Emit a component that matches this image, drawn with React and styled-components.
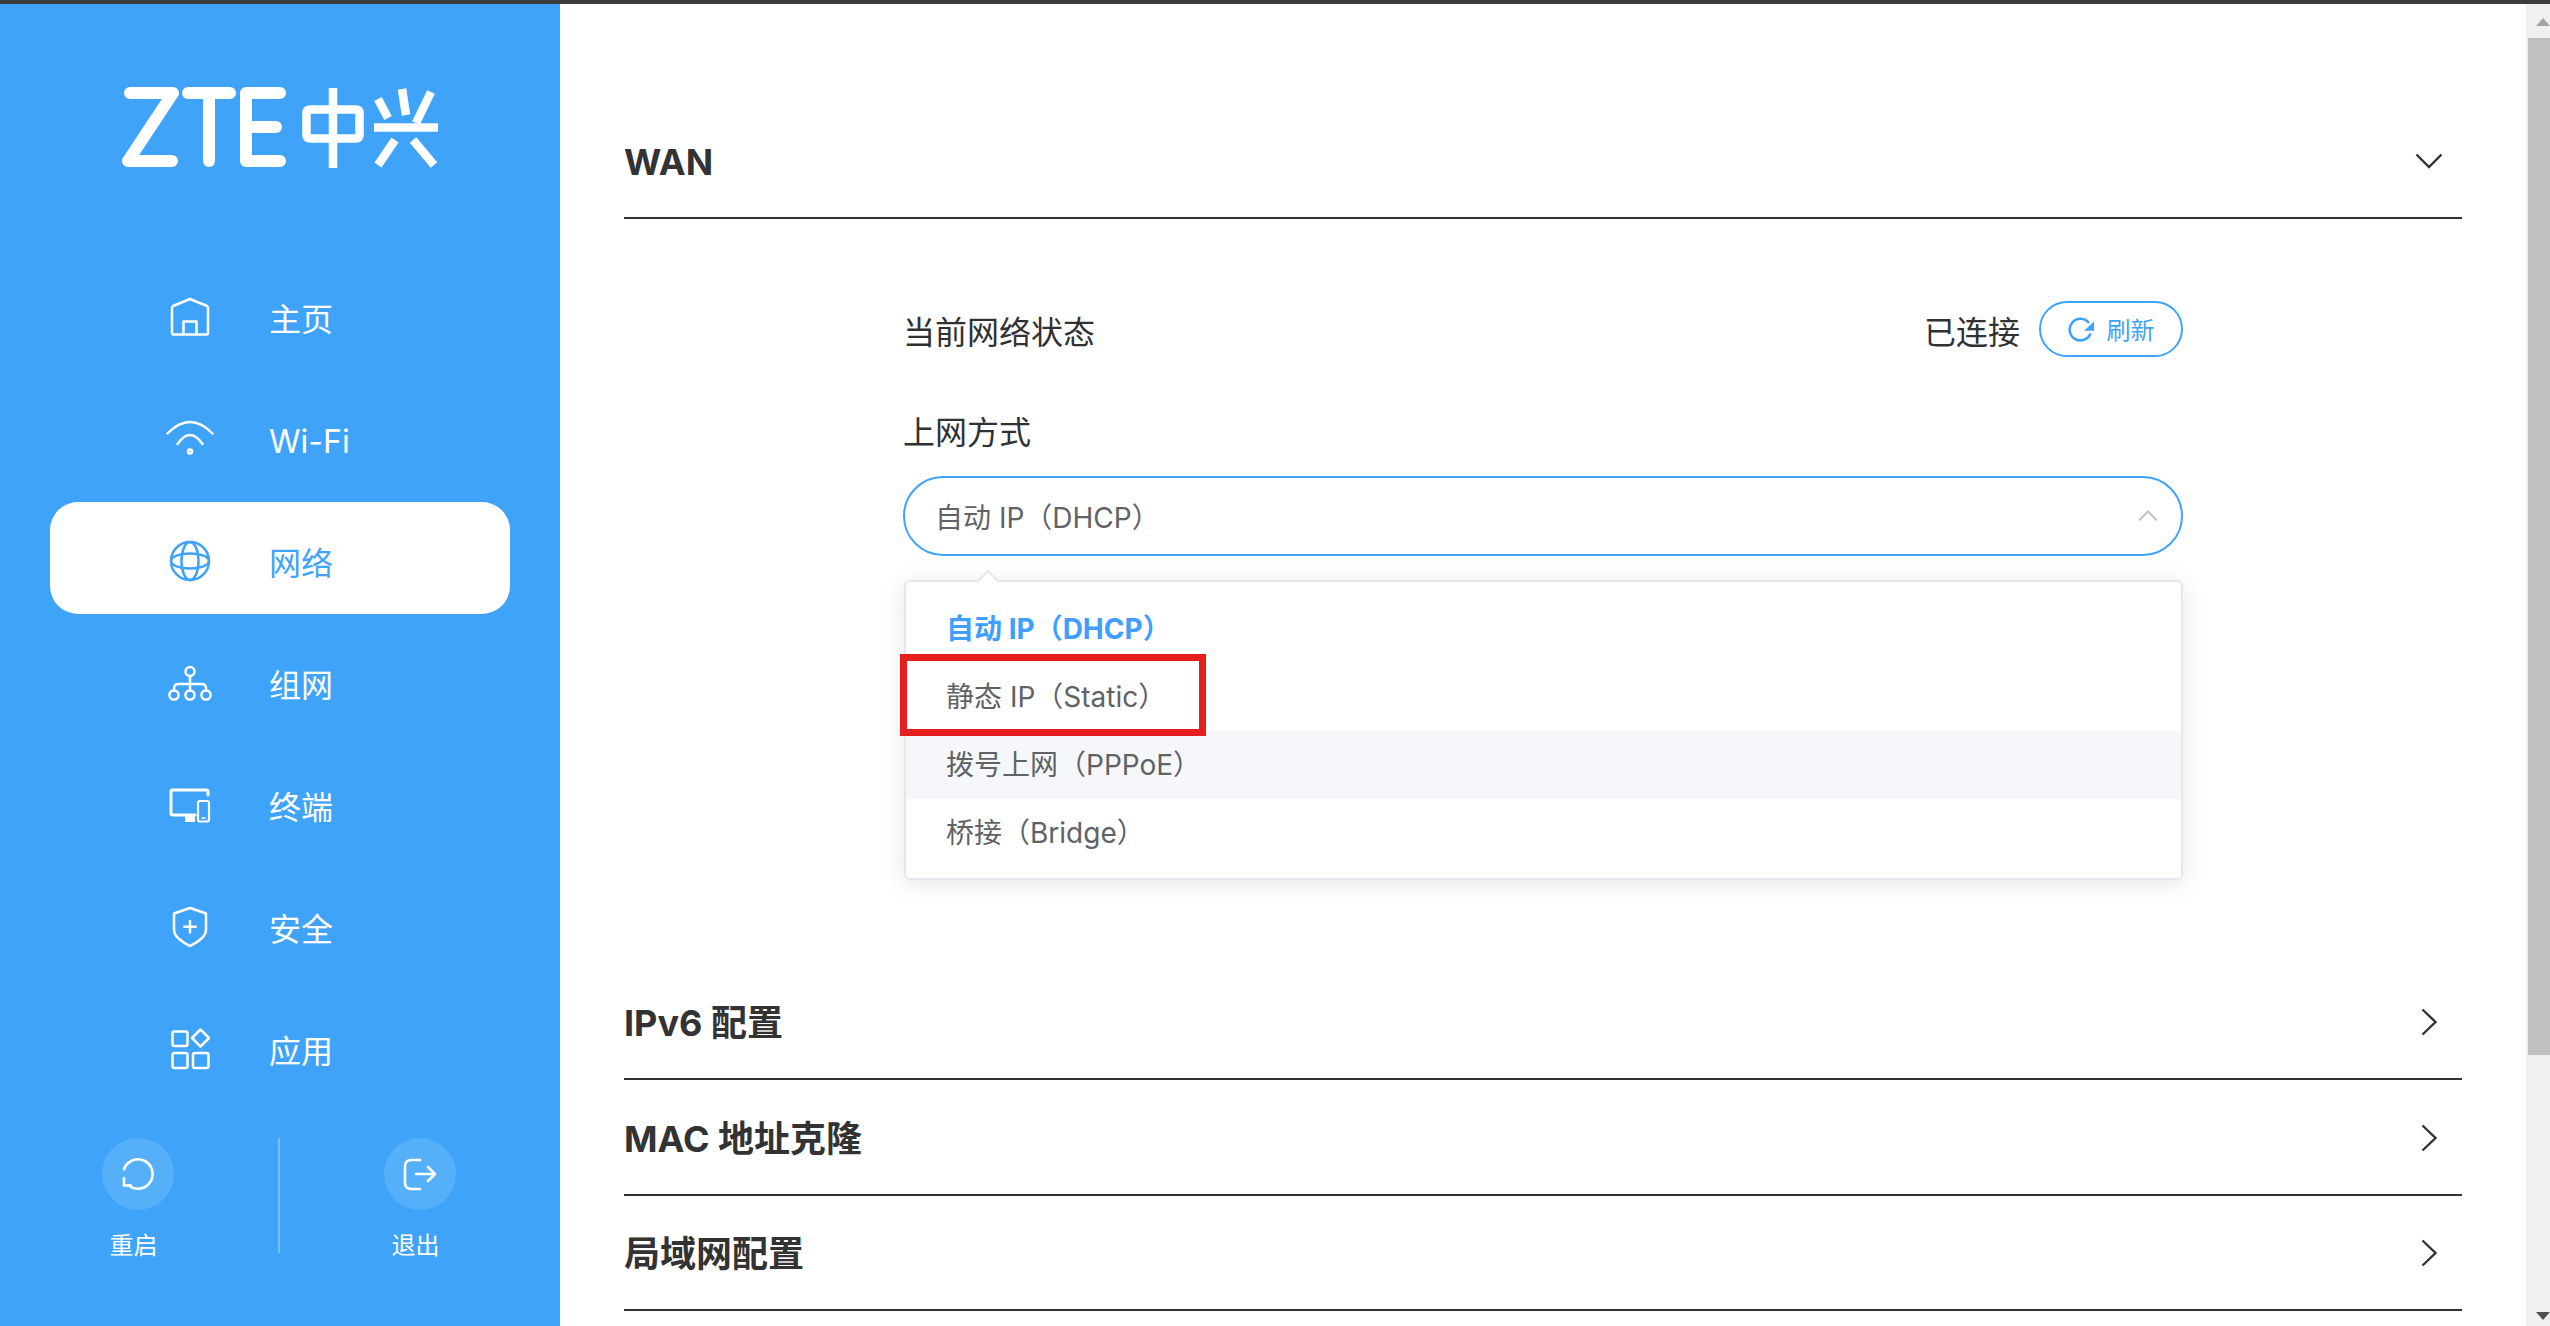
import React from "react";
import styled, { createGlobalStyle } from "styled-components";

const BLUE = "#3fa4f9";

const GlobalStyle = createGlobalStyle`
	html, body {
		margin: 0;
		padding: 0;
		height: 100%;
		overflow: hidden;
		background: #fff;
	}
	* {
		box-sizing: border-box;
	}
	body {
		font-family: Inter, "Noto Sans CJK SC", sans-serif;
	}
`;

const Logo = () => (
	<LogoSvg viewBox="0 0 320 84" role="img" aria-label="ZTE 中兴">
		<g fill="none" stroke="#fff" strokeWidth="12" strokeLinecap="round" strokeLinejoin="round">
			<polyline points="10,7 53,7 8,75 52,75" />
			<line x1="68" y1="7" x2="110" y2="7" />
			<line x1="89" y1="7" x2="89" y2="75" />
			<polyline points="160,7 126,7 126,75 160,75" />
			<line x1="126" y1="41" x2="156" y2="41" />
		</g>
		<g fill="none" stroke="#fff" strokeWidth="8.500">
			<rect x="186.500" y="23.500" width="53" height="29" rx="3" />
			<line x1="213" y1="2" x2="213" y2="82" />
			<line x1="254" y1="41.500" x2="318" y2="41.500" />
			<line x1="258" y1="13" x2="268" y2="32" />
			<line x1="282" y1="3" x2="286" y2="29" />
			<line x1="311" y1="6" x2="296" y2="37" />
			<line x1="275" y1="54" x2="258" y2="79" />
			<line x1="293" y1="54" x2="314" y2="79" />
		</g>
	</LogoSvg>
);

const HomeIcon = () => (
	<>
		<path d="M24 6 41 13Q42 13.500 42 15V40Q42 41.500 40.500 41.500H7.500Q6 41.500 6 40V15Q6 13.500 7 13Z" />
		<path d="M17.500 41V28.500H30.500V41" />
	</>
);

const WifiIcon = () => (
	<>
		<path d="M1.500 18.500Q24-4.500 46.500 18.500" />
		<path d="M11.500 29Q24 11 36.500 29" />
		<circle cx="24" cy="36.600" r="2" />
	</>
);

const GlobeIcon = () => (
	<>
		<circle cx="24" cy="24" r="19" />
		<ellipse cx="24" cy="24" rx="8.500" ry="19" />
		<ellipse cx="24" cy="24" rx="19" ry="7.500" />
	</>
);

const MeshIcon = () => (
	<>
		<circle cx="24" cy="12.500" r="4.500" />
		<circle cx="8" cy="36" r="4.600" />
		<circle cx="24" cy="36" r="4.600" />
		<circle cx="40" cy="36" r="4.600" />
		<path d="M24 17V31.500" />
		<path d="M8 31.500V29.500Q8 25 12.500 25H35.500Q40 25 40 29.500V31.500" />
	</>
);

const DevicesIcon = () => (
	<>
		<path d="M42 14V10.500Q42 9 40.500 9H6.500Q5 9 5 10.500V32.500Q5 34 6.500 34H29" strokeWidth="3" />
		<rect x="19" y="34" width="10" height="7" fill="#fff" stroke="none" />
		<rect x="32" y="20" width="11" height="20.500" rx="2" strokeWidth="2.200" />
		<path d="M36 37H39" strokeWidth="1.500" />
	</>
);

const ShieldIcon = () => (
	<>
		<path d="M24 5 40 10.500V27Q40 35 24 43 8 35 8 27V10.500Z" />
		<path d="M24 18V29.500M18.300 23.700H29.700" />
	</>
);

const AppsIcon = () => (
	<>
		<rect x="6.500" y="6.500" width="15" height="14.500" rx="2" />
		<rect x="6.500" y="28" width="15" height="15" rx="2" />
		<rect x="27" y="28" width="15.500" height="15" rx="2" />
		<path d="M34.500 4.500 43 13 34.500 21.500 26 13Z" />
	</>
);

const navItems = [
	{ label: "主页", Icon: HomeIcon },
	{ label: "Wi-Fi", Icon: WifiIcon },
	{ label: "网络", Icon: GlobeIcon, active: true },
	{ label: "组网", Icon: MeshIcon },
	{ label: "终端", Icon: DevicesIcon },
	{ label: "安全", Icon: ShieldIcon },
	{ label: "应用", Icon: AppsIcon },
];

const options = [
	{ label: "自动 IP（DHCP）", selected: true },
	{ label: "静态 IP（Static）" },
	{ label: "拨号上网（PPPoE）", hover: true },
	{ label: "桥接（Bridge）" },
];

const sections = ["IPv6 配置", "MAC 地址克隆", "局域网配置"];

const App = () => {
	return (
		<Page>
			<GlobalStyle />
			<TopBar />
			<Body>
				<Sidebar>
					<Logo />
					<Nav>
						{navItems.map(({ label, Icon, active }) => (
							<NavItem key={label} $active={active}>
								<NavIcon viewBox="0 0 48 48">
									<Icon />
								</NavIcon>
								<NavLabel>{label}</NavLabel>
							</NavItem>
						))}
					</Nav>
					<Actions>
						<Action>
							<ActionCircle>
								<ActionIcon viewBox="0 0 72 72">
									<path d="M22 31.300A14.700 14.700 0 1 1 26.500 47.300" />
									<path d="M22 40V47.500H29" />
								</ActionIcon>
							</ActionCircle>
							<ActionLabel>重启</ActionLabel>
						</Action>
						<ActionDivider />
						<Action>
							<ActionCircle>
								<ActionIcon viewBox="0 0 72 72">
									<path d="M36 22H27.500Q21 22 21 28.500V44.500Q21 51 27.500 51H36" />
									<path d="M32 36H51M44 29 51 36 44 43" />
								</ActionIcon>
							</ActionCircle>
							<ActionLabel>退出</ActionLabel>
						</Action>
					</Actions>
				</Sidebar>
				<Main>
					<SectionHeader>
						<SectionTitle>WAN</SectionTitle>
						<Chevron viewBox="0 0 32 32">
							<polyline points="3.500,9.500 16,22 28.500,9.500" />
						</Chevron>
					</SectionHeader>
					<SectionBody>
						<Form>
							<StatusRow>
								<FieldLabel>当前网络状态</FieldLabel>
								<StatusRight>
									<FieldLabel>已连接</FieldLabel>
									<RefreshButton>
										<RefreshIcon viewBox="0 0 26 26">
											<path d="M21 7A10.800 10.800 0 1 0 22.500 17.500" fill="none" stroke={BLUE} strokeWidth="2.600" />
											<path d="M16 14.800H26V5.500Z" fill={BLUE} />
										</RefreshIcon>
										刷新
									</RefreshButton>
								</StatusRight>
							</StatusRow>
							<MethodLabel>上网方式</MethodLabel>
							<SelectWrap>
								<SelectBox>
									<span>自动 IP（DHCP）</span>
									<SelectArrow viewBox="0 0 20 11">
										<polyline points="1,10.500 10,1.500 19,10.500" />
									</SelectArrow>
								</SelectBox>
								<Menu>
									<MenuCaret />
									{options.map((option) => (
										<MenuOption key={option.label} $selected={option.selected} $hover={option.hover}>
											{option.label}
										</MenuOption>
									))}
									<Annotation />
								</Menu>
							</SelectWrap>
						</Form>
					</SectionBody>
					{sections.map((title) => (
						<SectionHeader key={title}>
							<SectionTitle>{title}</SectionTitle>
							<Chevron viewBox="0 0 32 32">
								<polyline points="9.500,3.500 22.500,16 9.500,28.500" />
							</Chevron>
						</SectionHeader>
					))}
				</Main>
				<Scrollbar>
					<ScrollButton>
						<ScrollArrow $color="#a3a3a3" />
					</ScrollButton>
					<ScrollThumb />
					<ScrollTrack>
						<ScrollArrow $color="#505050" $down />
					</ScrollTrack>
				</Scrollbar>
			</Body>
		</Page>
	);
};

const Page = styled.div`
	display: flex;
	flex-direction: column;
	width: 2550px;
	height: 1326px;
	overflow: hidden;
`;

const TopBar = styled.div`
	height: 4px;
	flex: none;
	background: #3c3c3c;
`;

const Body = styled.div`
	display: flex;
	flex: 1;
	min-height: 0;
`;

const Sidebar = styled.aside`
	display: flex;
	flex-direction: column;
	flex: none;
	width: 560px;
	padding-top: 82px;
	background: ${BLUE};
`;

const LogoSvg = styled.svg`
	display: block;
	flex: none;
	width: 320px;
	height: 84px;
	margin-left: 120px;
`;

const Nav = styled.nav`
	display: flex;
	flex-direction: column;
	gap: 10px;
	margin: 88px 50px 0 50px;
`;

const NavItem = styled.div`
	display: flex;
	align-items: center;
	height: 112px;
	padding: 6px 0 0 116px;
	border-radius: 28px;
	color: ${(props) => (props.$active ? BLUE : "#fff")};
	background: ${(props) => (props.$active ? "#fff" : "transparent")};
`;

const NavIcon = styled.svg`
	flex: none;
	width: 48px;
	height: 48px;
	margin-right: 55px;
	fill: none;
	stroke: currentColor;
	stroke-width: 2.5;
	stroke-linecap: round;
	stroke-linejoin: round;
`;

const NavLabel = styled.span`
	font-size: 32px;
	line-height: 44px;
	padding-top: 6px;
`;

const Actions = styled.div`
	display: flex;
	justify-content: center;
	gap: 104px;
	margin: 36px 2px 0 0;
`;

const Action = styled.div`
	display: flex;
	flex-direction: column;
	align-items: center;
	width: 72px;
`;

const ActionCircle = styled.div`
	width: 72px;
	height: 72px;
	border-radius: 50%;
	background: rgba(255, 255, 255, 0.12);
`;

const ActionIcon = styled.svg`
	display: block;
	width: 72px;
	height: 72px;
	fill: none;
	stroke: #fff;
	stroke-width: 2.6;
	stroke-linecap: round;
	stroke-linejoin: round;
`;

const ActionLabel = styled.span`
	margin-top: 19px;
	padding-right: 9px;
	font-size: 24px;
	line-height: 34px;
	white-space: nowrap;
	color: #fff;
`;

const ActionDivider = styled.div`
	width: 2px;
	height: 115px;
	background: rgba(255, 255, 255, 0.3);
`;

const Main = styled.main`
	flex: 1;
	min-width: 0;
	padding: 99px 64px 0;
	background: #fff;
`;

const SectionHeader = styled.div`
	display: flex;
	align-items: center;
	justify-content: space-between;
	height: 115.5px;
	padding: 2px 17px 0 0;
	border-bottom: 2px solid #333;
`;

const SectionTitle = styled.h2`
	margin: 0;
	padding-top: 2px;
	font-size: 36px;
	font-weight: 700;
	line-height: 48px;
	color: #333;
`;

const Chevron = styled.svg`
	flex: none;
	width: 32px;
	height: 32px;
	fill: none;
	stroke: #333;
	stroke-width: 2.4;
`;

const SectionBody = styled.div`
	height: 746px;
`;

const Form = styled.div`
	width: 1280px;
	margin: 0 auto;
	padding-top: 82px;
`;

const StatusRow = styled.div`
	display: flex;
	align-items: center;
	justify-content: space-between;
	height: 56px;
`;

const StatusRight = styled.div`
	display: flex;
	align-items: center;
	gap: 19px;
`;

const FieldLabel = styled.span`
	padding-top: 9px;
	font-size: 32px;
	line-height: 44px;
	color: #303133;
`;

const RefreshButton = styled.button`
	display: flex;
	align-items: center;
	justify-content: center;
	gap: 13px;
	width: 144px;
	height: 56px;
	padding: 0;
	border: 2px solid ${BLUE};
	border-radius: 28px;
	background: #fff;
	font: inherit;
	font-size: 24px;
	color: ${BLUE};
`;

const RefreshIcon = styled.svg`
	flex: none;
	width: 26px;
	height: 26px;
`;

const MethodLabel = styled.div`
	margin: 54px 0 21px;
	font-size: 32px;
	line-height: 44px;
	color: #303133;
`;

const SelectWrap = styled.div`
	position: relative;
`;

const SelectBox = styled.div`
	display: flex;
	align-items: center;
	justify-content: space-between;
	height: 80px;
	padding: 0 23px 0 30px;
	border: 2px solid ${BLUE};
	border-radius: 40px;
	background: #fff;
	font-size: 28px;
	color: #606266;
`;

const SelectArrow = styled.svg`
	flex: none;
	width: 20px;
	height: 11px;
	fill: none;
	stroke: #c0c4cc;
	stroke-width: 2;
`;

const Menu = styled.div`
	position: absolute;
	top: 104px;
	left: 1px;
	right: 0;
	padding: 13px 0 11px;
	border: 2px solid #e4e7ed;
	border-radius: 6px;
	background: #fff;
	box-shadow: 0 4px 24px rgba(0, 0, 0, 0.1);
`;

const MenuCaret = styled.div`
	position: absolute;
	top: -9px;
	left: 74px;
	width: 16px;
	height: 16px;
	border-top: 2px solid #e4e7ed;
	border-left: 2px solid #e4e7ed;
	background: #fff;
	transform: rotate(45deg);
`;

const MenuOption = styled.div`
	position: relative;
	height: 68px;
	padding-left: 40px;
	font-size: 28px;
	font-weight: ${(props) => (props.$selected ? 700 : 400)};
	line-height: 68px;
	color: ${(props) => (props.$selected ? "#409eff" : "#606266")};
	background: ${(props) => (props.$hover ? "#f5f7fa" : "transparent")};
`;

const Annotation = styled.div`
	position: absolute;
	top: 72px;
	left: -6px;
	width: 306px;
	height: 82px;
	border: 7px solid #e61e1e;
`;

const Scrollbar = styled.div`
	display: flex;
	flex-direction: column;
	flex: none;
	width: 24px;
	background: #f0f0f0;
`;

const ScrollButton = styled.div`
	display: flex;
	justify-content: flex-end;
	flex: none;
	height: 34px;
	padding-top: 14px;
`;

const ScrollThumb = styled.div`
	flex: none;
	height: 1017px;
	margin-left: 2px;
	background: #c0c0c0;
`;

const ScrollTrack = styled.div`
	display: flex;
	align-items: flex-end;
	justify-content: flex-end;
	flex: 1;
	padding-bottom: 6px;
`;

const ScrollArrow = styled.div`
	width: 0;
	height: 0;
	border-left: 7.5px solid transparent;
	border-right: 7.5px solid transparent;
	${(props) => (props.$down ? "border-top" : "border-bottom")}: 8px solid ${(props) => props.$color};
`;

export default App;
